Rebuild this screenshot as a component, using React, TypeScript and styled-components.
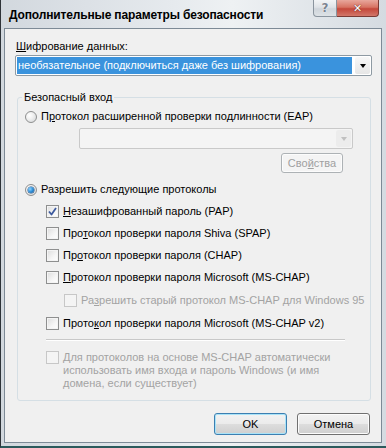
import React from 'react';
import styled, { createGlobalStyle } from 'styled-components';

const GlobalStyle = createGlobalStyle`
  html, body {
    margin: 0;
    padding: 0;
    background: #ffffff;
  }
  body {
    font-family: "Liberation Sans", Arial, sans-serif;
    font-size: 11px;
  }
`;

const Window = styled.div`
  width: 386px;
  height: 448px;
  box-sizing: border-box;
  display: flex;
  flex-direction: column;
  padding: 0 4px 3px 3px;
  border-left: 1px solid #2e3338;
  border-bottom: 2px solid #2c5a5c;
  background: linear-gradient(to right, #d2d8de 0%, #e6eaee 45%, #eef1f3 60%, #d5dbe1 100%);
`;

const TitleBar = styled.div`
  height: 28px;
  display: flex;
  align-items: flex-start;
  justify-content: space-between;
  margin-left: -1px;
  margin-right: -4px;
`;

const TitleText = styled.div`
  font-family: "Liberation Sans", Arial, sans-serif;
  font-weight: bold;
  font-size: 12px;
  letter-spacing: -0.15px;
  color: #000;
  padding: 9px 0 0 6px;
  line-height: 13px;
`;

const CaptionButtons = styled.div`
  display: flex;
  margin-right: 7px;
`;

const CaptionButton = styled.div<{ $close?: boolean }>`
  width: ${p => (p.$close ? '42px' : '24px')};
  height: 17px;
  box-sizing: border-box;
  display: flex;
  align-items: center;
  justify-content: center;
  border: 1px solid ${p => (p.$close ? '#7a3a34' : '#8a949e')};
  border-top: none;
  border-left: ${p => (p.$close ? 'none' : undefined)};
  border-radius: ${p => (p.$close ? '0 0 4px 0' : '0 0 0 4px')};
  background: ${p =>
    p.$close
      ? 'linear-gradient(to bottom, #e8a79c 0%, #d77363 45%, #c4473a 55%, #d2776a 100%)'
      : 'linear-gradient(to bottom, #f2f4f6 0%, #dfe3e7 45%, #cfd5db 55%, #dde2e6 100%)'};
  color: ${p => (p.$close ? '#ffffff' : '#7b8490')};
  font-family: "DejaVu Sans", sans-serif;
  font-weight: bold;
  font-size: ${p => (p.$close ? '11px' : '12px')};
  text-shadow: ${p =>
    p.$close ? '0 0 1px #6a2a22, 0 0 1px #6a2a22' : '0 0 1px #ffffff, 0 0 1px #ffffff'};
`;

const Client = styled.div`
  flex: 1;
  display: flex;
  flex-direction: column;
  border: 1px solid #7d8a96;
  background: #f0f0f0;
  padding: 11px 9px 0 10px;
  color: #000;
`;

const Label = styled.div`
  line-height: 13px;
  margin-left: 1px;
`;

const Combo = styled.div<{ $disabled?: boolean }>`
  height: 21px;
  box-sizing: border-box;
  display: flex;
  align-items: stretch;
  border: 1px solid ${p => (p.$disabled ? '#c9c9c9' : '#8e9aa3')};
  border-radius: 2px;
  background: ${p => (p.$disabled ? '#f4f4f4' : '#ffffff')};
  padding: 1px;
`;

const ComboValue = styled.div`
  flex: 1;
  background: #3a93dd;
  color: #fff;
  line-height: 17px;
  padding-left: 1px;
  white-space: nowrap;
`;

const ComboEmpty = styled.div`
  flex: 1;
`;

const DropButton = styled.div<{ $disabled?: boolean }>`
  width: 15px;
  margin-left: 3px;
  display: flex;
  align-items: center;
  justify-content: center;
  background: ${p => (p.$disabled ? '#ececec' : 'linear-gradient(#f7f7f7, #e6e6e6)')};
  border-radius: 2px;
`;

const Arrow = styled.div<{ $disabled?: boolean }>`
  width: 0;
  height: 0;
  border-left: 3.5px solid transparent;
  border-right: 3.5px solid transparent;
  border-top: 4px solid ${p => (p.$disabled ? '#c0c0c0' : '#000')};
`;

const GroupBox = styled.fieldset`
  margin: 15px 1px 0 2px;
  padding: 0 0 10px 7px;
  border: 1px solid #d5dfe5;
  border-radius: 3px;
  min-width: 0;
`;

const Legend = styled.legend`
  margin-left: -3px;
  padding: 0 2px;
  line-height: 13px;
`;

const Row = styled.div<{ $top: number; $indent?: number }>`
  display: flex;
  align-items: flex-start;
  margin-top: ${p => p.$top}px;
  margin-left: ${p => p.$indent || 0}px;
  line-height: 13px;
`;

const RowText = styled.span<{ $disabled?: boolean }>`
  color: ${p => (p.$disabled ? '#a3a3a3' : '#000')};
  margin-left: 4px;
  white-space: nowrap;
`;

const WrapText = styled.span`
  color: #a3a3a3;
  margin-left: 4px;
  line-height: 13px;
  width: 280px;
`;

const RadioCircle = styled.span<{ $on?: boolean }>`
  width: 12px;
  height: 12px;
  margin-top: 1px;
  box-sizing: border-box;
  border-radius: 50%;
  border: 1px solid #8e8f8f;
  background: radial-gradient(circle at 35% 35%, #ffffff 0%, #f0f0f0 40%, #cfd2d4 100%);
  display: flex;
  align-items: center;
  justify-content: center;
  flex-shrink: 0;

  &::after {
    content: '';
    display: ${p => (p.$on ? 'block' : 'none')};
    width: 6px;
    height: 6px;
    border-radius: 50%;
    background: radial-gradient(circle at 35% 35%, #8fd3ff 0%, #2f8fd8 50%, #13508f 100%);
    box-shadow: 0 0 0 0.5px #1c4f86;
  }
`;

const CheckBox = styled.span<{ $disabled?: boolean }>`
  width: 13px;
  height: 13px;
  box-sizing: border-box;
  border: 1px solid ${p => (p.$disabled ? '#c7c7c7' : '#8e8f8f')};
  background: ${p => (p.$disabled ? '#f4f4f4' : 'linear-gradient(135deg, #dcdcdc 0%, #f6f6f6 60%, #ffffff 100%)')};
  box-shadow: inset 0 0 0 1px #f4f4f4;
  display: flex;
  align-items: center;
  justify-content: center;
  flex-shrink: 0;
`;

const Separator = styled.div`
  height: 1px;
  width: 299px;
  margin: 9px 0 0 21px;
  background: #c8c8c8;
  border-bottom: 1px solid #ffffff;
`;

const PushButton = styled.div<{ $disabled?: boolean; $default?: boolean }>`
  width: ${p => (p.$disabled ? '62px' : '73px')};
  height: ${p => (p.$disabled ? '20px' : '22px')};
  box-sizing: border-box;
  display: flex;
  align-items: center;
  justify-content: center;
  border-radius: 3px;
  border: 1px solid ${p => (p.$disabled ? '#adb2b5' : p.$default ? '#3c7fb1' : '#707070')};
  background: ${p =>
    p.$disabled
      ? '#f4f4f4'
      : 'linear-gradient(to bottom, #f2f2f2 0%, #ebebeb 50%, #dddddd 51%, #cfcfcf 100%)'};
  box-shadow: ${p => (p.$default ? 'inset 0 0 0 1px #a9e3f8' : 'inset 0 0 0 1px #fcfcfc')};
  color: ${p => (p.$disabled ? '#a0a0a0' : '#000')};
`;

const ButtonRow = styled.div`
  display: flex;
  justify-content: flex-end;
  gap: 10px;
  margin: 12px 2px 0 0;
`;

const U = styled.span`
  text-decoration: underline;
  text-underline-offset: 1px;
`;

const Check = () => (
  <svg width="9" height="9" viewBox="0 0 9 9">
    <path d="M1 4.5 L3.5 7.5 L8 1" fill="none" stroke="#3d5a9e" strokeWidth="1.8" strokeLinejoin="round" />
  </svg>
);

export default function App() {
  return (
    <Window>
      <GlobalStyle />
      <TitleBar>
        <TitleText>Дополнительные параметры безопасности</TitleText>
        <CaptionButtons>
          <CaptionButton>?</CaptionButton>
          <CaptionButton $close>✕</CaptionButton>
        </CaptionButtons>
      </TitleBar>
      <Client>
        <Label><U>Ш</U>ифрование данных:</Label>
        <Combo style={{ marginTop: 2 }}>
          <ComboValue>необязательное (подключиться даже без шифрования)</ComboValue>
          <DropButton><Arrow /></DropButton>
        </Combo>

        <GroupBox>
          <Legend>Безопасный вход</Legend>
          <Row $top={6}>
            <RadioCircle />
            <RowText>П<U>р</U>отокол расширенной проверки подлинности (EAP)</RowText>
          </Row>
          <Row $top={5} $indent={54}>
            <Combo $disabled style={{ width: 274 }}>
              <ComboEmpty />
              <DropButton $disabled><Arrow $disabled /></DropButton>
            </Combo>
          </Row>
          <Row $top={4} $indent={256}>
            <PushButton $disabled>Сво<U>й</U>ства</PushButton>
          </Row>
          <Row $top={10}>
            <RadioCircle $on />
            <RowText>Разрешить сле<U>д</U>ующие протоколы</RowText>
          </Row>
          <Row $top={9} $indent={21}>
            <CheckBox><Check /></CheckBox>
            <RowText><U>Н</U>езашифрованный пароль (PAP)</RowText>
          </Row>
          <Row $top={9} $indent={21}>
            <CheckBox />
            <RowText>Про<U>т</U>окол проверки пароля Shiva (SPAP)</RowText>
          </Row>
          <Row $top={9} $indent={21}>
            <CheckBox />
            <RowText>Пр<U>о</U>токол проверки пароля (CHAP)</RowText>
          </Row>
          <Row $top={9} $indent={21}>
            <CheckBox />
            <RowText><U>П</U>ротокол проверки пароля Microsoft (MS-CHAP)</RowText>
          </Row>
          <Row $top={10} $indent={39}>
            <CheckBox $disabled />
            <RowText $disabled>Ра<U>з</U>решить старый протокол MS-CHAP для Windows 95</RowText>
          </Row>
          <Row $top={10} $indent={21}>
            <CheckBox />
            <RowText>Прото<U>к</U>ол проверки пароля Microsoft (MS-CHAP v2)</RowText>
          </Row>
          <Separator />
          <Row $top={10} $indent={21}>
            <CheckBox $disabled />
            <WrapText>
              <U>Д</U>ля протоколов на основе MS-CHAP автоматически использовать имя входа и пароль Windows (и имя домена, если существует)
            </WrapText>
          </Row>
        </GroupBox>

        <ButtonRow>
          <PushButton $default>OK</PushButton>
          <PushButton>Отмена</PushButton>
        </ButtonRow>
      </Client>
    </Window>
  );
}
